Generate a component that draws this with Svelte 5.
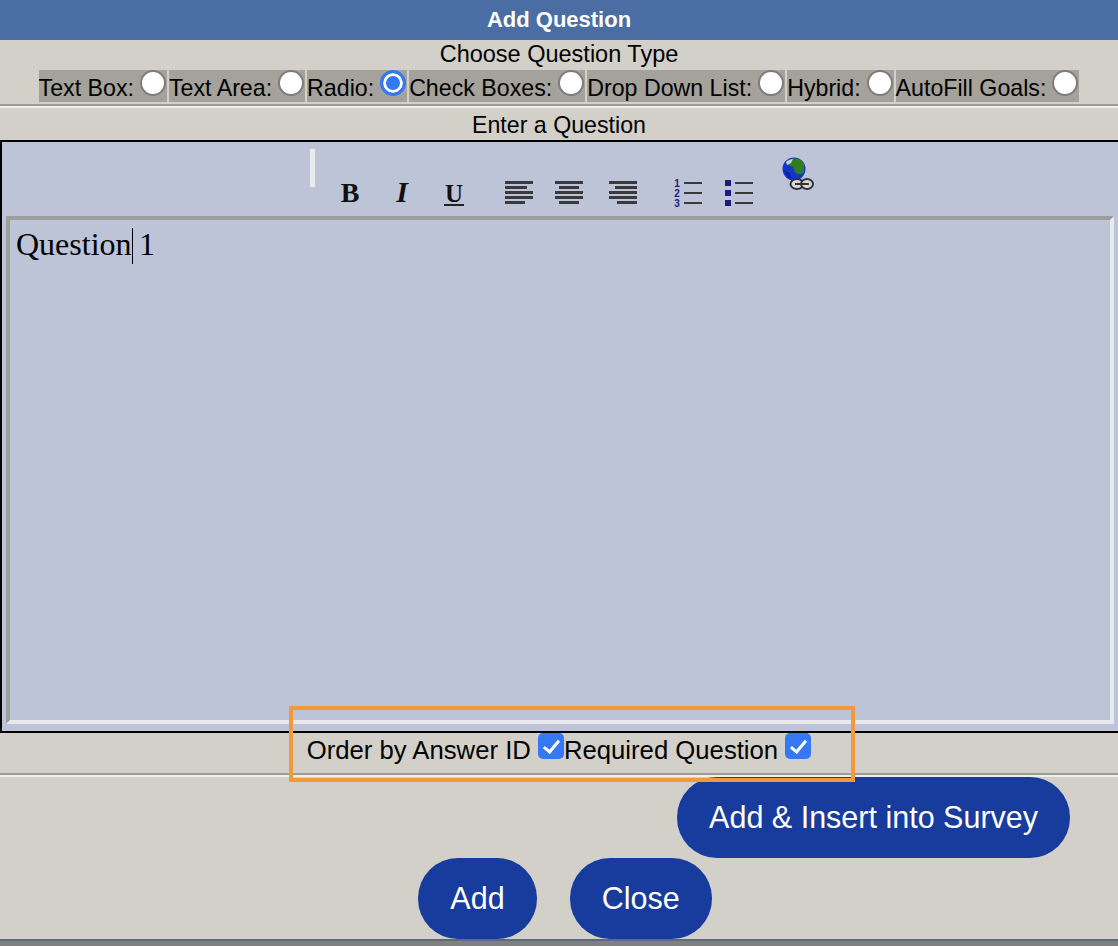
<script>
	const types = ["Text Box", "Text Area", "Radio", "Check Boxes", "Drop Down List", "Hybrid", "AutoFill Goals"];
	let selected = $state("Radio");
	let orderById = $state(true);
	let required = $state(true);
</script>

<main>
	<div class="title">Add Question</div>
	<div class="caption choose">Choose Question Type</div>

	<div class="types">
		{#each types as t}
			<label class="type">
				<span>{t}:</span>
				<input type="radio" name="qtype" value={t} bind:group={selected} />
			</label>
		{/each}
	</div>

	<hr />
	<div class="caption enter">Enter a Question</div>

	<div class="editor">
		<div class="toolbar">
			<div class="handle"></div>

			<svg class="tb tb-b" width="32" height="32" viewBox="0 0 32 32">
				<text x="16" y="23" text-anchor="middle" class="glyph bold">B</text>
			</svg>
			<svg class="tb tb-i" width="32" height="32" viewBox="0 0 32 32">
				<text x="16" y="23" text-anchor="middle" class="glyph bold ital">I</text>
			</svg>
			<svg class="tb tb-u" width="32" height="32" viewBox="0 0 32 32">
				<text x="16" y="23" text-anchor="middle" class="glyph bold under">U</text>
				<rect x="6" y="25" width="20" height="2" fill="#222" />
			</svg>

			<svg class="tb tb-left" width="32" height="32" viewBox="0 0 32 32" fill="#3a3a3c">
				<rect x="2" y="2" width="28" height="3" />
				<rect x="2" y="7" width="22" height="3" />
				<rect x="2" y="12" width="28" height="3" />
				<rect x="2" y="17" width="28" height="3" />
				<rect x="2" y="22" width="20" height="3" />
			</svg>
			<svg class="tb tb-center" width="32" height="32" viewBox="0 0 32 32" fill="#3a3a3c">
				<rect x="2" y="2" width="28" height="3" />
				<rect x="6" y="7" width="20" height="3" />
				<rect x="2" y="12" width="28" height="3" />
				<rect x="2" y="17" width="28" height="3" />
				<rect x="6" y="22" width="20" height="3" />
			</svg>
			<svg class="tb tb-right" width="32" height="32" viewBox="0 0 32 32" fill="#3a3a3c">
				<rect x="2" y="2" width="28" height="3" />
				<rect x="8" y="7" width="22" height="3" />
				<rect x="2" y="12" width="28" height="3" />
				<rect x="2" y="17" width="28" height="3" />
				<rect x="10" y="22" width="20" height="3" />
			</svg>

			<svg class="tb tb-ol" width="32" height="32" viewBox="0 0 32 32">
				<text x="6" y="8" text-anchor="middle" class="num">1</text>
				<text x="6" y="18" text-anchor="middle" class="num">2</text>
				<text x="6" y="28" text-anchor="middle" class="num">3</text>
				<g fill="#3a3a3c">
					<rect x="13" y="3" width="18" height="2" />
					<rect x="13" y="13" width="18" height="2" />
					<rect x="13" y="23" width="18" height="2" />
				</g>
			</svg>
			<svg class="tb tb-ul" width="32" height="32" viewBox="0 0 32 32">
				<g fill="#1a1a7e">
					<rect x="2" y="1" width="6" height="6" />
					<rect x="2" y="11" width="6" height="6" />
					<rect x="2" y="21" width="6" height="6" />
				</g>
				<g fill="#3a3a3c">
					<rect x="12" y="3" width="18" height="2" />
					<rect x="12" y="13" width="18" height="2" />
					<rect x="12" y="23" width="18" height="2" />
				</g>
			</svg>

			<svg class="tb tb-link" width="32" height="34" viewBox="0 0 32 34">
				<circle cx="12" cy="12" r="11.5" fill="#1436c8" />
				<path d="M9 2 C14 0 20 2 22 7 L22 15 C20 18 15 18 13 15 L11 10 L6 8 Z" fill="#2f7d22" />
				<path d="M4 5 C6 3 9 2 11 2 L9 6 L5 8 Z" fill="#c9d2dc" />
				<path d="M2 13 C3 18 6 21 10 22 L8 16 Z" fill="#0a22a8" />
				<g fill="#d8d8d8" stroke="#333" stroke-width="2">
					<ellipse cx="15" cy="27" rx="6.5" ry="5" />
					<ellipse cx="25" cy="27" rx="6" ry="5" />
				</g>
				<rect x="13" y="26" width="14" height="2" fill="#333" />
			</svg>
		</div>

		<div class="area">
			Question<span class="caret"></span> 1
		</div>
	</div>

	<div class="options">
		<label>Order by Answer ID <input type="checkbox" bind:checked={orderById} /></label>
		<label>Required Question <input type="checkbox" bind:checked={required} /></label>
	</div>

	<hr class="lower" />

	<div class="actions">
		<div class="row insert">
			<button>Add &amp; Insert into Survey</button>
		</div>
		<div class="row pair">
			<button>Add</button>
			<button>Close</button>
		</div>
	</div>

	<div class="bottom"></div>

	<div class="highlight"></div>
</main>

<style>
	:global(body) {
		background: #d3d0c9;
	}

	main {
		position: relative;
		height: 946px;
		overflow: hidden;
		background: #d3d0c9;
		font-family: "Liberation Sans", Arial, sans-serif;
		color: #000;
		display: flex;
		flex-direction: column;
	}

	.title {
		height: 40px;
		line-height: 39px;
		background: #4a6da3;
		color: #fff;
		font-weight: bold;
		font-size: 22px;
		text-align: center;
	}

	.caption {
		text-align: center;
		font-size: 23.5px;
	}

	.choose {
		height: 30px;
		line-height: 28px;
	}

	.enter {
		height: 32px;
		line-height: 34px;
		font-size: 23.2px;
	}

	.types {
		display: flex;
		justify-content: center;
		gap: 2px;
		height: 32px;
	}

	.type {
		display: flex;
		align-items: flex-start;
		gap: 6px;
		height: 32px;
		padding-right: 1px;
		background: #a5a29c;
		font-size: 23.2px;
		line-height: 36px;
	}

	.type input {
		appearance: none;
		width: 26px;
		height: 26px;
		margin: 0;
		flex: none;
		border: 2px solid #7d7d7d;
		border-radius: 50%;
		background: #fff;
	}

	.type input:checked {
		border: 3px solid #3478f6;
		background: #3478f6;
		box-shadow: inset 0 0 0 3px #fff;
	}

	hr {
		height: 2px;
		margin: 2px 0 0;
		border: none;
		background: #9b9b98;
		box-shadow: 0 2px 0 #eeeeea;
		margin-bottom: 2px;
	}

	hr.lower {
		margin: 0 0 2px;
	}

	.editor {
		height: 593px;
		box-sizing: border-box;
		border: 2px solid #000;
		border-right: none;
		background: #bec4d8;
		padding: 0 4px 7px 4px;
		display: flex;
		flex-direction: column;
	}

	.toolbar {
		height: 74px;
		flex: none;
		display: flex;
		align-items: flex-start;
		padding-left: 303px;
	}

	.handle {
		width: 5px;
		height: 38px;
		margin-top: 6px;
		background: #e9ebf0;
		border: 1px solid #c6c6c6;
		border-radius: 2px;
		box-sizing: content-box;
	}

	.tb {
		flex: none;
		margin-top: 37px;
	}

	.tb-b { margin-left: 18px; }
	.tb-i { margin-left: 20px; }
	.tb-u { margin-left: 20px; }
	.tb-left { margin-left: 33px; }
	.tb-center { margin-left: 18px; }
	.tb-right { margin-left: 22px; }
	.tb-ol { margin-left: 32px; }
	.tb-ul { margin-left: 20px; }
	.tb-link { margin-left: 27px; margin-top: 15px; }

	.glyph {
		font-family: "Liberation Serif", serif;
		font-size: 28px;
		fill: #111;
	}

	.bold {
		font-weight: bold;
	}

	.ital {
		font-style: italic;
		font-size: 30px;
	}

	.under {
		font-size: 25px;
	}

	.num {
		font-family: "Liberation Sans", sans-serif;
		font-size: 10px;
		font-weight: bold;
		fill: #1a1a7e;
	}

	.area {
		flex: 1;
		box-sizing: border-box;
		border: 4px solid;
		border-color: #9e9e9c #e8e9ee #e8e9ee #9e9e9c;
		padding: 6px 6px;
		font-family: "Liberation Serif", serif;
		font-size: 32px;
		line-height: 37px;
		color: #000;
	}

	.caret {
		display: inline-block;
		width: 0;
		height: 36px;
		border-left: 1.5px solid #000;
		margin-right: -1.5px;
		vertical-align: -9px;
	}

	.options {
		height: 40px;
		display: flex;
		justify-content: center;
		font-size: 25.7px;
		line-height: 35px;
		padding-right: 0;
	}

	.options label {
		display: flex;
		align-items: flex-start;
		white-space: pre;
	}

	.options input {
		appearance: none;
		position: relative;
		width: 26px;
		height: 26px;
		margin: 0;
		border-radius: 5px;
		background: #3478f6;
	}

	.options input:checked::after {
		content: "";
		position: absolute;
		left: 9px;
		top: 4px;
		width: 6px;
		height: 13px;
		border: solid #fff;
		border-width: 0 3.5px 3.5px 0;
		transform: rotate(40deg);
	}

	.actions {
		height: 162px;
		display: flex;
		flex-direction: column;
	}

	.row {
		display: flex;
		height: 81px;
	}

	.insert {
		justify-content: flex-end;
		padding-right: 48px;
	}

	.pair {
		justify-content: center;
		gap: 33px;
		padding-left: 12px;
	}

	button {
		height: 81px;
		padding: 0 32px;
		border: none;
		border-radius: 40px;
		background: #173c9e;
		color: #fff;
		font-family: "Liberation Sans", Arial, sans-serif;
		font-size: 30.5px;
	}

	.bottom {
		flex: 1;
		background: #808080;
		border-top: 2px solid #5c6b80;
	}

	.highlight {
		position: absolute;
		left: 289px;
		top: 706px;
		width: 566px;
		height: 76px;
		box-sizing: border-box;
		border: 4.5px solid #f2993a;
		pointer-events: none;
	}
</style>
